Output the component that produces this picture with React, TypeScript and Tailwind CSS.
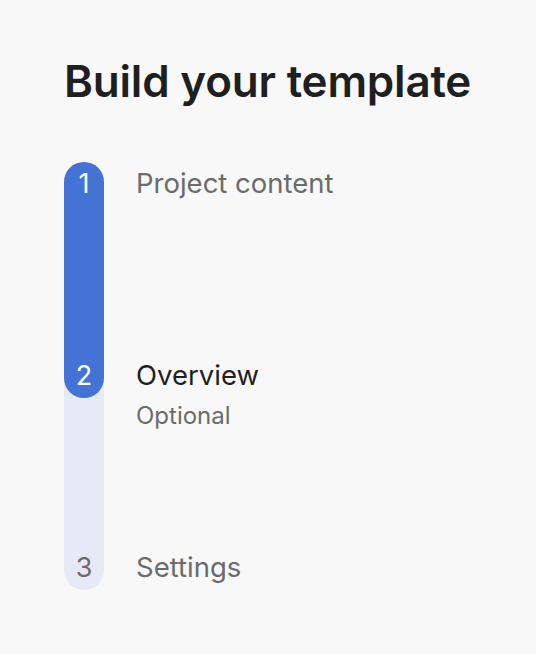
export default function App() {
  return (
    <div className="min-h-[654px] bg-[#f8f8f8] pl-16 pt-[55px] font-['Inter','Liberation_Sans',sans-serif]">
      <h1 className="whitespace-nowrap text-[44px] font-semibold leading-[52px] tracking-[-0.2px] text-[#1f1f1f]">Build your template</h1>

      <div className="mt-[55px] flex gap-8">
        {/* Track */}
        <div className="flex h-[428px] w-10 flex-col rounded-full bg-[#e6eaf6]">
          <div className="flex h-[236px] flex-col justify-between rounded-full bg-[#4373d4] text-white">
            <div className="flex h-11 items-center justify-center text-[27px]">1</div>
            <div className="flex h-11 items-center justify-center text-[27px]">2</div>
          </div>
          <div className="flex flex-1 flex-col justify-end">
            <div className="flex h-11 items-center justify-center text-[27px] text-[#6b6b6b]">3</div>
          </div>
        </div>

        {/* Labels */}
        <div className="flex flex-col">
          <div className="flex h-11 items-center text-[27.5px] text-[#6b6b6b]">Project content</div>
          <div className="mt-[148px] flex h-11 items-center text-[27.5px] text-[#1f1f1f]">Overview</div>
          <div className="flex h-9 items-center text-[24px] text-[#6b6b6b]">Optional</div>
          <div className="mt-[112px] flex h-11 items-center text-[27.5px] text-[#6b6b6b]">Settings</div>
        </div>
      </div>
    </div>
  );
}
